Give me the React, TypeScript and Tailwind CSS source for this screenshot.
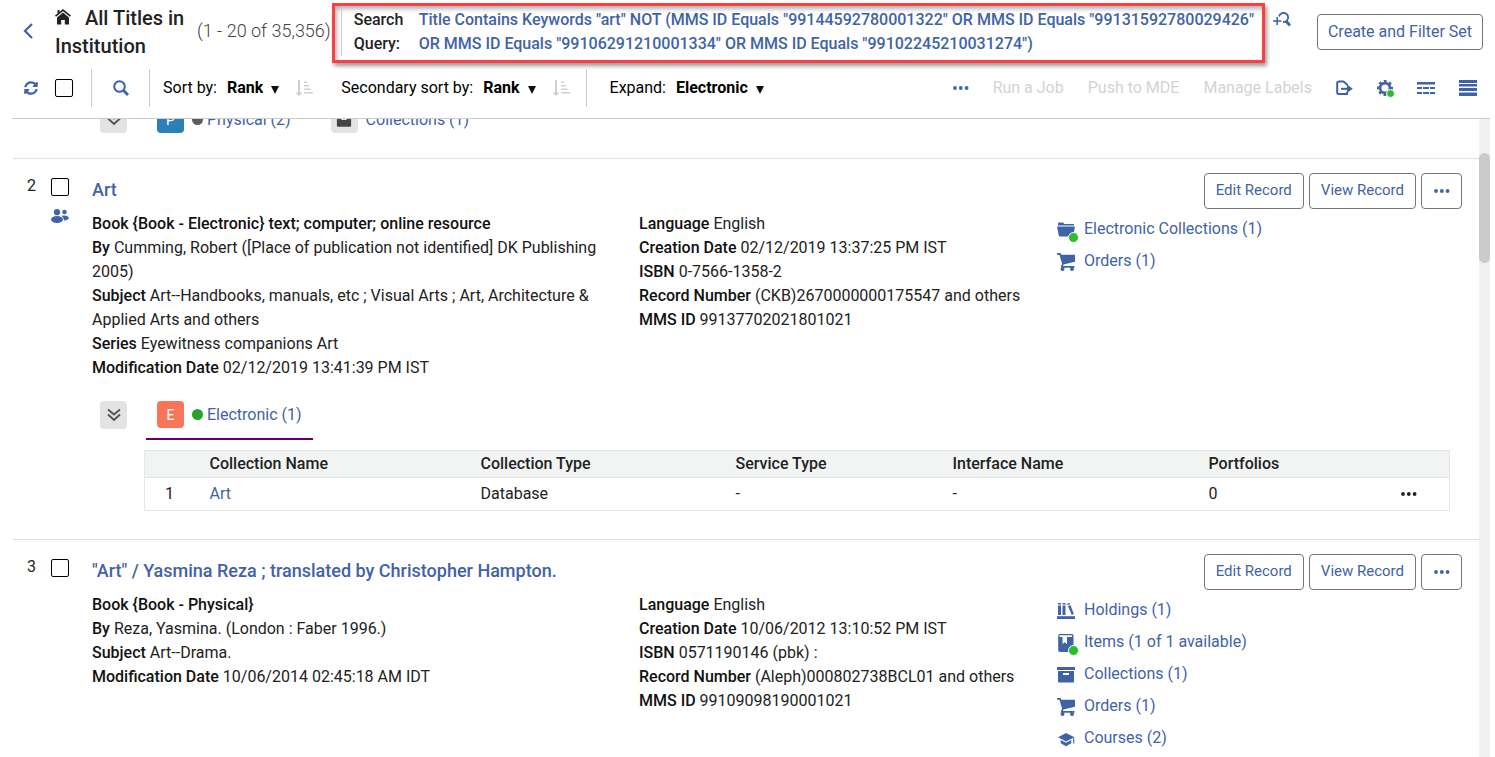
import { useState } from 'react';
import type { ReactNode } from 'react';
import { FaSyncAlt } from 'react-icons/fa';

type IconName = 'folder' | 'cart' | 'books' | 'item' | 'archive' | 'course';

interface RelatedLink {
  icon: IconName;
  label: string;
  active?: boolean;
}

interface TitleRecord {
  index: number;
  title: string;
  shared?: boolean;
  main: [string, string][];
  info: [string, string][];
  links: RelatedLink[];
}

const RECORDS: TitleRecord[] = [
  {
    index: 2,
    title: 'Art',
    shared: true,
    main: [
      ['Book {Book - Electronic} text; computer; online resource', ''],
      ['By', 'Cumming, Robert ([Place of publication not identified] DK Publishing 2005)'],
      ['Subject', 'Art--Handbooks, manuals, etc ; Visual Arts ; Art, Architecture & Applied Arts and others'],
      ['Series', 'Eyewitness companions Art'],
      ['Modification Date', '02/12/2019 13:41:39 PM IST'],
    ],
    info: [
      ['Language', 'English'],
      ['Creation Date', '02/12/2019 13:37:25 PM IST'],
      ['ISBN', '0-7566-1358-2'],
      ['Record Number', '(CKB)2670000000175547 and others'],
      ['MMS ID', '99137702021801021'],
    ],
    links: [
      { icon: 'folder', label: 'Electronic Collections (1)', active: true },
      { icon: 'cart', label: 'Orders (1)' },
    ],
  },
  {
    index: 3,
    title: '"Art" / Yasmina Reza ; translated by Christopher Hampton.',
    main: [
      ['Book {Book - Physical}', ''],
      ['By', 'Reza, Yasmina. (London : Faber 1996.)'],
      ['Subject', 'Art--Drama.'],
      ['Modification Date', '10/06/2014 02:45:18 AM IDT'],
    ],
    info: [
      ['Language', 'English'],
      ['Creation Date', '10/06/2012 13:10:52 PM IST'],
      ['ISBN', '0571190146 (pbk) :'],
      ['Record Number', '(Aleph)000802738BCL01 and others'],
      ['MMS ID', '99109098190001021'],
    ],
    links: [
      { icon: 'books', label: 'Holdings (1)' },
      { icon: 'item', label: 'Items (1 of 1 available)', active: true },
      { icon: 'archive', label: 'Collections (1)' },
      { icon: 'cart', label: 'Orders (1)' },
      { icon: 'course', label: 'Courses (2)' },
    ],
  },
];

const ICONS: Record<IconName, ReactNode> = {
  folder: (
    <>
      <path d="M1 4V2.500A1 1 0 0 1 2 1.500h4l1.500 1.500H17v1.500H1z" />
      <path d="M0 5.500h18l-2 10H3q-1 0-1.200-1z" />
    </>
  ),
  cart: (
    <>
      <path d="M0 0h3.500l1 1.800H18v7L6.500 11.500l-.5 1.500H17.500v1.700H4.500q-1-.7-.4-2l1-1.700L2.500 1.800H0z" />
      <circle cx="5.500" cy="16" r="2" />
      <circle cx="15" cy="16" r="2" />
    </>
  ),
  books: (
    <>
      <path d="M1 1h3v1.500H1zM5.500 1h3v1.500h-3zM1 3.500h3V13H1zM5.500 3.500h3V13h-3z" />
      <path d="M10 2l2.600-1.200.6 1.300-2.600 1.200zM11 4.200l2.400-1.100L16.800 12l-2 1z" />
      <path d="M0 14.200h18V17H0z" />
    </>
  ),
  item: (
    <path
      fillRule="evenodd"
      d="M3 0h12q1.500 0 1.500 1.500V18H3q-1.800 0-1.800-1.800V1.800Q1.200 0 3 0zM3 1.300q-.8 0-.8.8t.8.8h12V1.300zM5.500 3v7l2.200-1.700L10 10V3z"
    />
  ),
  archive: (
    <>
      <path d="M0 1h18v3H0z" />
      <path fillRule="evenodd" d="M1 5h16v10.500q0 1-1 1H2q-1 0-1-1zM6 7v2h6V7z" />
    </>
  ),
  course: (
    <>
      <path d="M9 3l8.500 4.300L9 11.500 1 7.300z" />
      <path d="M3.700 10L9 12.800 14.300 10v3.200L9 16.200l-5.300-3zM16.200 8h1.100v5.500h-1.100z" />
    </>
  ),
};

function Dots({ className = '' }: { className?: string }) {
  return (
    <svg viewBox="0 0 16 4" className={`w-4 h-1 ${className}`} fill="currentColor" aria-hidden="true">
      <circle cx="2" cy="2" r="1.900" />
      <circle cx="7.800" cy="2" r="1.900" />
      <circle cx="13.600" cy="2" r="1.900" />
    </svg>
  );
}

function HomeIcon() {
  return (
    <svg viewBox="0 0 16 16" className="inline w-4 h-4 mr-[14px] mb-[6px]" fill="currentColor" aria-hidden="true">
      <path d="M8 0l8 6.500-1 1.300L8 2.200 1 7.800 0 6.500z" />
      <path d="M8 3.600L14 8.500V15.500H9.800V11H6.200v4.500H2V8.500zM2.500 1h2v2.200l-2 1.600z" />
    </svg>
  );
}

function SortIcon() {
  return (
    <svg viewBox="0 0 18 16" className="w-[18px] h-4 text-[#d0d0d0]" fill="currentColor" aria-hidden="true">
      <path d="M3 0h2v12.500h2.500L4 16 .5 12.500H3z" />
      <path d="M9 1.500h3v1.500H9zM9 5h5v1.500H9zM9 8.500h6.500V10H9zM9 12h9v1.500H9z" />
    </svg>
  );
}

function DoubleChevron() {
  return (
    <svg viewBox="0 0 14 14" className="w-[14px] h-[14px]" fill="none" stroke="#555" strokeWidth="1.900" aria-hidden="true">
      <path d="M1 1.500l6 5 6-5M1 6.500l6 5.500 6-5.500" />
    </svg>
  );
}

function SortSelect({ id, label, value }: { id: string; label: string; value: string }) {
  return (
    <div className="flex items-center">
      <label htmlFor={id} className="mr-[10px] whitespace-nowrap">{label}</label>
      <select id={id} className="appearance-none field-sizing-content bg-transparent font-bold text-black focus:outline-none">
        <option>{value}</option>
      </select>
      <svg viewBox="0 0 8 8" className="w-2 h-2 ml-2 mt-1" fill="#111" aria-hidden="true">
        <path d="M0 0h8L4 8z" />
      </svg>
    </div>
  );
}

function Checkbox({ label }: { label: string }) {
  const [checked, setChecked] = useState(false);
  return (
    <input
      type="checkbox"
      aria-label={label}
      checked={checked}
      onChange={(e) => setChecked(e.target.checked)}
      className="appearance-none block shrink-0 w-[18px] h-[18px] border border-black rounded-xs bg-white checked:bg-[#3f63a6]"
    />
  );
}

function Header() {
  return (
    <header className="flex items-start pl-[23px] pr-[7px] h-16">
      <button type="button" aria-label="Back" className="mt-[23px] mr-5 text-[#3f63a6]">
        <svg viewBox="0 0 11 16" className="w-[11px] h-4" fill="none" stroke="currentColor" strokeWidth="2.200">
          <path d="M9 1L2 8l7 7" />
        </svg>
      </button>
      <h1 className="w-[142px] shrink-0 mt-1 ml-px text-xl leading-7 font-medium text-[#222]">
        <HomeIcon />All Titles in Institution
      </h1>
      <span className="mt-[17px] mr-px shrink-0 text-lg leading-7 font-light text-[#444]">(1 - 20 of 35,356)</span>
      <div className="flex-1 mt-[3px] border-3 border-[#f94144] shadow-[2px_3px_4px_rgba(0,0,0,0.4),inset_2px_3px_4px_rgba(0,0,0,0.3)] pt-[2px] pb-1 pl-[6px] pr-1">
        <div className="flex border-l border-[#ccc] pl-3 leading-6 font-medium">
          <span className="w-[65px] pr-3 shrink-0 text-[#222]">Search Query:</span>
          <a href="#query" className="text-[#3f63a6]">
            Title Contains Keywords "art" NOT (MMS ID Equals "99144592780001322" OR MMS ID Equals
            "99131592780029426" OR MMS ID Equals "99106291210001334" OR MMS ID Equals "99102245210031274")
          </a>
        </div>
      </div>
      <button type="button" aria-label="Refine search" className="mt-3 ml-2 mr-[26px] text-[#3f63a6]">
        <svg viewBox="0 0 18 16" className="w-[18px] h-4" fill="none" stroke="currentColor" strokeWidth="1.800">
          <path d="M6 4.500A4.600 4.600 0 1 1 12 9.800L10 10" />
          <path d="M4.200 5v8M0 9h8.400" strokeWidth="1.600" />
          <path d="M13 9l4 4.500" strokeWidth="2.800" />
        </svg>
      </button>
      <button type="button" className="mt-[14px] h-9 px-[10px] shrink-0 border border-[#777] rounded-sm text-[#3f63a6]">
        Create and Filter Set
      </button>
    </header>
  );
}

function Toolbar() {
  return (
    <div className="flex items-start h-[55px] ml-3 pl-3 pr-[13px] pt-1 border-b border-[#ccc]">
      <div className="flex items-center h-10 text-black">
        <button type="button" aria-label="Refresh" className="mr-[17px] text-[#3f63a6]">
          <FaSyncAlt size={14} />
        </button>
        <Checkbox label="Select all" />
        <span className="w-px h-[38px] mx-[18px] bg-[#ccc]" />
        <button type="button" aria-label="Search in results" className="ml-[3px] text-[#3f63a6]">
          <svg viewBox="0 0 16 16" className="w-4 h-4" fill="none" stroke="currentColor">
            <circle cx="6.500" cy="6.500" r="5.300" strokeWidth="2" />
            <path d="M10.500 10.500l4.500 4.500" strokeWidth="2.800" />
          </svg>
        </button>
        <span className="w-px h-[38px] ml-5 mr-[13px] bg-[#ccc]" />
        <SortSelect id="sort" label="Sort by:" value="Rank" />
        <button type="button" aria-label="Sort direction" className="ml-4 mr-7"><SortIcon /></button>
        <SortSelect id="sort2" label="Secondary sort by:" value="Rank" />
        <button type="button" aria-label="Secondary sort direction" className="ml-4"><SortIcon /></button>
        <span className="w-px h-[38px] ml-4 mr-[23px] bg-[#ccc]" />
        <SortSelect id="expand" label="Expand:" value="Electronic" />
      </div>
      <div className="flex items-center h-10 ml-auto gap-6 text-[#d3d3d3] whitespace-nowrap">
        <button type="button" aria-label="More actions" className="text-[#2c6fb0]"><Dots /></button>
        <button type="button" disabled>Run a Job</button>
        <button type="button" disabled>Push to MDE</button>
        <button type="button" disabled>Manage Labels</button>
        <button type="button" aria-label="Export" className="text-[#3f63a6]">
          <svg viewBox="0 0 17 16" className="w-[17px] h-4" fill="none" stroke="currentColor" strokeWidth="2">
            <path d="M11 5.500V4.500L7.500 1.500H3Q1.200 1.500 1.200 3v9.500Q1.200 14 3 14h8v-2" />
            <path d="M5 8.800h8" />
            <path d="M11 4.500l5.800 4.300-5.800 4.300z" fill="currentColor" stroke="none" />
          </svg>
        </button>
        <button type="button" aria-label="Settings" className="relative text-[#3f63a6]">
          <svg viewBox="0 0 16 16" className="w-4 h-4" fill="none" stroke="currentColor">
            <circle cx="8" cy="8" r="4.900" strokeWidth="2.600" />
            <circle cx="8" cy="8" r="6.900" strokeWidth="2.200" strokeDasharray="2.900 2.519" strokeDashoffset="1.450" />
          </svg>
          <span className="absolute -right-[2px] -bottom-[2px] w-[9px] h-[9px] rounded-full border border-white bg-[#2dbb30]" />
        </button>
        <button type="button" aria-label="Manage columns" className="text-[#3f63a6]">
          <svg viewBox="0 0 18 14" className="w-[18px] h-[14px]" fill="currentColor">
            <path d="M0 1h18v2.500H0zM0 6h5v2H0zM6 6h6v2H6zM13 6h5v2h-5zM0 11h5v2H0zM6 11h6v2H6zM13 11h5v2h-5z" />
          </svg>
        </button>
        <button type="button" aria-label="Compact view" className="text-[#3f63a6]">
          <svg viewBox="0 0 18 16" className="w-[18px] h-4" fill="currentColor">
            <path d="M0 0h18v3H0zM0 4h18v2.500H0zM0 8h18v3H0zM0 12.500h18V16H0z" />
          </svg>
        </button>
      </div>
    </div>
  );
}

function RecordButtons() {
  return (
    <div className="flex gap-[5px] shrink-0 text-[15px] text-[#3f63a6]">
      <button type="button" className="h-9 px-[11px] pb-[2px] border border-[#777] rounded-sm">Edit Record</button>
      <button type="button" className="h-9 px-[11px] pb-[2px] border border-[#777] rounded-sm">View Record</button>
      <button
        type="button"
        aria-label="More record actions"
        className="flex items-center justify-center w-[41px] h-9 border border-[#777] rounded-sm"
      >
        <Dots />
      </button>
    </div>
  );
}

function FieldList({ fields }: { fields: [string, string][] }) {
  return (
    <div className="leading-6 pr-8 text-[#222]">
      {fields.map(([name, value]) => (
        <p key={name}>
          <strong className="font-medium text-[#111]">{name}</strong> {value}
        </p>
      ))}
    </div>
  );
}

function RelatedItem({ icon, label, active }: RelatedLink) {
  return (
    <li>
      <a href="#related" className="flex items-center gap-[9px] h-6 text-[#3f63a6]">
        <span className="relative mt-[2px]">
          <svg viewBox="0 0 18 18" className="w-[18px] h-[18px]" fill="currentColor" aria-hidden="true">
            {ICONS[icon]}
          </svg>
          {active && (
            <span className="absolute -right-[4px] -bottom-[4px] w-[11px] h-[11px] rounded-full border border-white bg-[#2dbb30]" />
          )}
        </span>
        {label}
      </a>
    </li>
  );
}

function ExpandButton() {
  return (
    <button
      type="button"
      aria-label="Collapse"
      className="flex items-center justify-center w-[27px] h-7 rounded-sm bg-[#e3e3e3]"
    >
      <DoubleChevron />
    </button>
  );
}

function ElectronicTable() {
  return (
    <table className="w-full table-fixed border border-[#e3e6e6] text-left text-[#222]">
      <colgroup>
        <col className="w-[65px]" />
        <col className="w-[271px]" />
        <col className="w-[255px]" />
        <col className="w-[217px]" />
        <col className="w-[256px]" />
        <col className="w-[172px]" />
        <col className="w-[69px]" />
      </colgroup>
      <thead>
        <tr className="h-[27px] bg-[#f2f4f4] border-b border-[#e3e6e6] leading-6">
          <td />
          <th className="font-medium">Collection Name</th>
          <th className="font-medium">Collection Type</th>
          <th className="font-medium">Service Type</th>
          <th className="font-medium">Interface Name</th>
          <th className="font-medium">Portfolios</th>
          <td />
        </tr>
      </thead>
      <tbody>
        <tr className="h-[33px]">
          <td className="pl-5">1</td>
          <td><a href="#collection" className="text-[#3f63a6]">Art</a></td>
          <td>Database</td>
          <td>-</td>
          <td>-</td>
          <td>0</td>
          <td>
            <button type="button" aria-label="Row actions" className="flex ml-5"><Dots /></button>
          </td>
        </tr>
      </tbody>
    </table>
  );
}

function RecordRow({ record, children }: { record: TitleRecord; children?: ReactNode }) {
  return (
    <article className="flex pt-[14px] border-t border-[#ddd]">
      <div className="w-[38px] pt-px pl-[14px] text-[#222]">{record.index}</div>
      <div className="w-[41px] pt-[5px]">
        <Checkbox label={`Select ${record.title}`} />
        {record.shared && (
          <svg viewBox="0 0 18 14" className="w-[18px] h-[14px] mt-[13px]" fill="#3f63a6" role="img" aria-label="Shared">
            <circle cx="6" cy="3.200" r="3.100" />
            <circle cx="13.500" cy="3" r="2.300" />
            <ellipse cx="6" cy="10.500" rx="6" ry="3.500" />
            <path d="M10.500 6.800q5.500-1.200 7.500 2-.8 2.600-5 2.700-.3-2.600-2.500-4.700z" />
          </svg>
        )}
      </div>
      <div className="flex-1 min-w-0">
        <div className="flex justify-between pr-[17px]">
          <h2 className="pt-[3px] text-lg leading-7 font-medium">
            <a href="#record" className="text-[#3f63a6]">{record.title}</a>
          </h2>
          <RecordButtons />
        </div>
        <div className="grid grid-cols-[547fr_418fr_422fr] pt-[3px]">
          <FieldList fields={record.main} />
          <FieldList fields={record.info} />
          <ul className="flex flex-col gap-2 pt-[5px]">
            {record.links.map((link) => <RelatedItem key={link.label} {...link} />)}
          </ul>
        </div>
        {children}
      </div>
    </article>
  );
}

export default function App() {
  return (
    <div className="flex flex-col h-screen pr-[5px] overflow-hidden bg-white font-['Roboto',sans-serif] text-base">
      <Header />
      <Toolbar />
      <div className="flex flex-1 min-h-0">
        <main className="flex-1 min-w-0 pl-[13px] overflow-hidden">
          {/* Tail of the previous record */}
          <div className="flex items-end h-[39px] pb-[25px] pl-[87px] overflow-hidden text-[#3f63a6]">
            <ExpandButton />
            <a href="#physical" className="flex items-center ml-[30px]">
              <span className="flex items-center justify-center w-[27px] h-[27px] rounded-sm bg-[#2c7fb8] text-sm text-white">P</span>
              <span className="w-[11px] h-[11px] ml-2 mr-1 rounded-full bg-[#5c5c5c]" />
              Physical (2)
            </a>
            <a href="#collections" className="flex items-center ml-10">
              <span className="flex items-center justify-center w-[27px] h-[27px] mr-2 rounded-sm bg-[#e3e3e3] text-[#444]">
                <svg viewBox="0 0 18 18" className="w-4 h-4" fill="currentColor">{ICONS.archive}</svg>
              </span>
              Collections (1)
            </a>
          </div>

          <RecordRow record={RECORDS[0]}>
            <div className="flex items-start pt-[21px] pl-2">
              <ExpandButton />
              <a href="#electronic" className="flex items-center h-[39px] ml-[19px] pb-[10px] px-[11px] border-b-2 border-[#660066] text-[#3f63a6]">
                <span className="flex items-center justify-center w-[27px] h-[27px] rounded-sm bg-[#f87559] text-sm text-white">E</span>
                <span className="w-[11px] h-[11px] ml-2 mr-1 rounded-full bg-[#27a22d]" />
                Electronic (1)
              </a>
            </div>
            <div className="pt-[10px] pb-7 pl-[52px] pr-[30px]">
              <ElectronicTable />
            </div>
          </RecordRow>

          <RecordRow record={RECORDS[1]} />
        </main>
        <div className="w-[11px] pt-[34px] bg-[#f0f0f0]">
          <div className="h-[110px] rounded-full bg-[#cbcbcb]" />
        </div>
      </div>
    </div>
  );
}
